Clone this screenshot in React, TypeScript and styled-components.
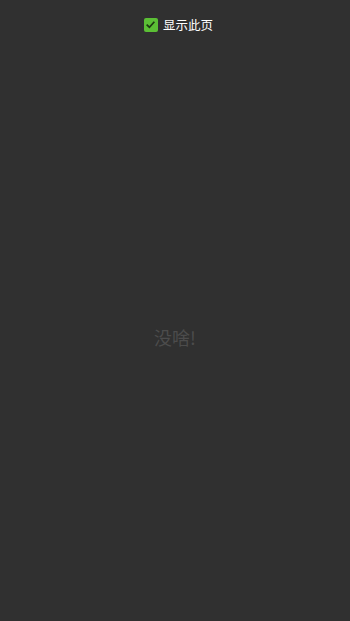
import styled, { createGlobalStyle } from "styled-components";

const GlobalStyle = createGlobalStyle`
    html, body {
        margin: 0;
        padding: 0;
        background: #303030;
    }
    body {
        font-family: "Noto Sans", "Noto Sans CJK SC", sans-serif;
    }
`;

const Page = styled.div`
    width: 350px;
    height: 621px;
    display: flex;
    flex-direction: column;
    align-items: center;
    background: #303030;
`;

const Toolbar = styled.label`
    display: flex;
    align-items: center;
    gap: 5px;
    margin-top: 17px;
    margin-left: 7px;
    height: 15px;
`;

const CheckBox = styled.span`
    width: 14px;
    height: 14px;
    border-radius: 2px;
    background: #5bbf35;
    display: flex;
    align-items: center;
    justify-content: center;
`;

const Label = styled.span`
    font-family: "Noto Sans CJK SC", sans-serif;
    font-size: 12.5px;
    color: #ffffff;
    line-height: 15px;
`;

const Empty = styled.div`
    flex: 1;
    display: flex;
    align-items: center;
    justify-content: center;
    padding-top: 20px;
    font-family: "Noto Sans CJK SC", sans-serif;
    font-size: 18px;
    color: #4c4c4c;
`;

export default function App() {
    return (
        <Page>
            <GlobalStyle />
            <Toolbar>
                <CheckBox>
                    <svg width="11" height="11" viewBox="0 0 10 10">
                        <path d="M1.5 5.2 L4 7.5 L8.5 2.5" fill="none" stroke="#1e3a12" strokeWidth="1.6" />
                    </svg>
                </CheckBox>
                <Label>显示此页</Label>
            </Toolbar>
            <Empty>没啥!</Empty>
        </Page>
    );
}
